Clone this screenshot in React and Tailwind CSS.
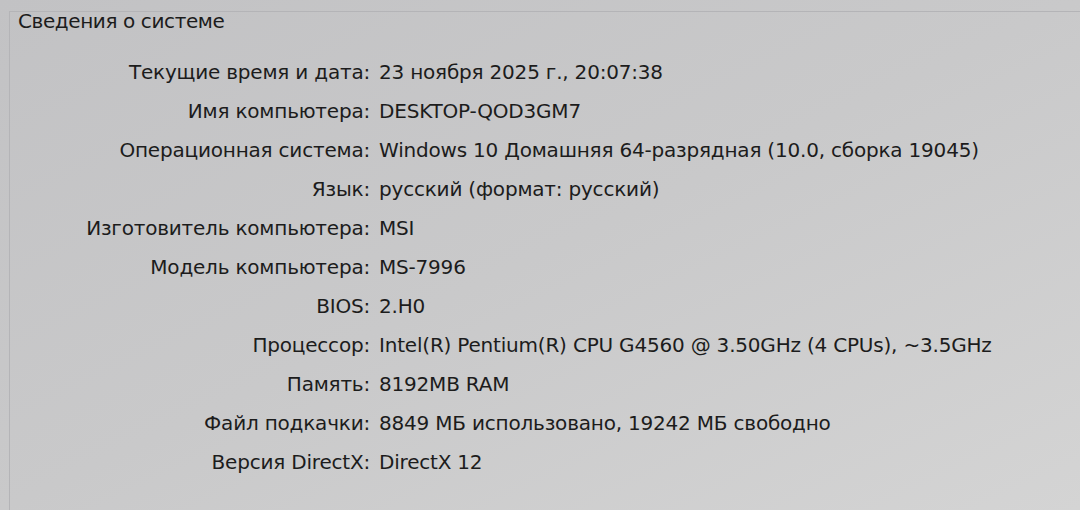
import React from 'react';

const rows = [
  ['Текущие время и дата:', '23 ноября 2025 г., 20:07:38'],
  ['Имя компьютера:', 'DESKTOP-QOD3GM7'],
  ['Операционная система:', 'Windows 10 Домашняя 64-разрядная (10.0, сборка 19045)'],
  ['Язык:', 'русский (формат: русский)'],
  ['Изготовитель компьютера:', 'MSI'],
  ['Модель компьютера:', 'MS-7996'],
  ['BIOS:', '2.H0'],
  ['Процессор:', 'Intel(R) Pentium(R) CPU G4560 @ 3.50GHz (4 CPUs), ~3.5GHz'],
  ['Память:', '8192MB RAM'],
  ['Файл подкачки:', '8849 МБ использовано, 19242 МБ свободно'],
  ['Версия DirectX:', 'DirectX 12'],
];

const App = () => {
  return (
    <div
      className="w-[1080px] h-[510px] overflow-hidden bg-gradient-to-br from-[#c2c2c4] via-[#c9c9ca] to-[#d4d4d4] text-[#1c1c1c] pt-[11px] pl-[9px]"
      style={{ fontFamily: '"DejaVu Sans", Tahoma, sans-serif' }}
    >
      {/* Group box */}
      <div className="h-[600px] border-l border-t border-[#b4b4b7]">
        <div className="pl-[8px] text-[20px] leading-[18px] tracking-[-0.4px]">
          Сведения о системе
        </div>

        <div className="grid grid-cols-[360px_1fr] gap-x-[9px] pt-[23px] text-[20px] leading-[39px] tracking-[-0.2px]">
          {rows.map(([label, value]) => (
            <React.Fragment key={label}>
              <div className="text-right whitespace-nowrap">{label}</div>
              <div className="whitespace-nowrap">{value}</div>
            </React.Fragment>
          ))}
        </div>
      </div>
    </div>
  );
};

export default App;
